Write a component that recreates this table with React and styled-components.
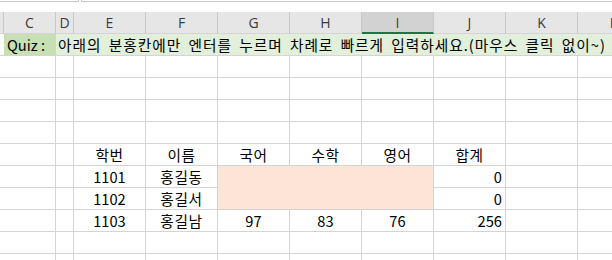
import React from 'react';
import styled, { createGlobalStyle } from 'styled-components';

const GRID = '#d4d4d4';
const COLS = '4px 52px 18px repeat(8, 72px)';
const KR = '"Noto Sans CJK KR", "Noto Sans", sans-serif';

const GlobalStyle = createGlobalStyle`
  html, body { margin: 0; padding: 0; background: #fff; }
  body { font-family: ${KR}; }
`;

const Sheet = styled.div`
  width: 612px;
  height: 260px;
  overflow: hidden;
  background: #fff;
`;

const TopEdge = styled.div`
  display: flex;
  height: 12px;
`;

const NameBox = styled.div`
  width: 78px;
  height: 1px;
  border-bottom: 1px solid #c8c8c8;
  border-right: 1px solid #c8c8c8;
`;

const FormulaBox = styled.div`
  flex: 1;
  margin-left: 2px;
  height: 1px;
  border-bottom: 1px solid #c8c8c8;
  border-left: 1px solid #c8c8c8;
`;

const HeaderRow = styled.div`
  display: grid;
  grid-template-columns: ${COLS};
  height: 22px;
  background: #e6e6e6;
`;

const ColHeader = styled.div`
  box-sizing: border-box;
  display: flex;
  align-items: center;
  justify-content: center;
  border-right: 1px solid #c8c8c8;
  border-bottom: ${p => (p.$selected ? '2px solid #217346' : '1px solid #d4d4d4')};
  background: ${p => (p.$selected ? '#d2d2d2' : 'transparent')};
  font-family: "Open Sans", "Noto Sans", sans-serif;
  font-size: 14px;
  color: #3a3a3a;
  padding-top: ${p => (p.$selected ? '1px' : '0')};
`;

const Body = styled.div`
  display: grid;
  grid-template-columns: ${COLS};
  grid-auto-rows: 22px;
`;

const Cell = styled.div`
  box-sizing: border-box;
  grid-column: span ${p => p.$span || 1};
  grid-row: span ${p => p.$rows || 1};
  border-right: 1px solid ${p => p.$edge || GRID};
  border-bottom: 1px solid ${GRID};
  background: ${p => p.$fill || '#fff'};
  text-align: ${p => p.$align || 'left'};
  padding: 0 ${p => (p.$align === 'right' ? '3px' : '2px')} 0 ${p => p.$pl || '2px'};
  font-size: 14.67px;
  line-height: 22px;
  letter-spacing: ${p => p.$ls || '0'};
  word-spacing: ${p => p.$ws || '0'};
  color: #000;
  white-space: nowrap;
  overflow: visible;
`;

const headers = ['', 'C', 'D', 'E', 'F', 'G', 'H', 'I', 'J', 'K', 'L'];

const EMPTY = Array(11).fill('');

const table = [
  ['', '', '', '학번', '이름', '국어', '수학', '영어', '합계', '', ''],
  ['', '', '', '1101', '홍길동', 'PINK', '0', '', ''],
  ['', '', '', '1102', '홍길서', '0', '', ''],
  ['', '', '', '1103', '홍길남', '97', '83', '76', '256', '', ''],
];

function EmptyRow({ k }) {
  return EMPTY.map((_, i) => <Cell key={`${k}-${i}`} />);
}

const isHangul = v => /[\uac00-\ud7a3]/.test(v);

export default function App() {
  return (
    <>
      <GlobalStyle />
      <Sheet>
        <TopEdge>
          <NameBox />
          <FormulaBox />
        </TopEdge>
        <HeaderRow>
          {headers.map((h, i) => (
            <ColHeader key={i} $selected={h === 'I'}>{h}</ColHeader>
          ))}
        </HeaderRow>
        <Body>
          <Cell />
          <Cell $fill="#c6e0b4" $edge="#c6e0b4" $pl="3px">Quiz :</Cell>
          <Cell $fill="#e2efda" $edge="#e2efda" $span={9} $ls="1px" $ws="3px">
            아래의 분홍칸에만 엔터를 누르며 차례로 빠르게 입력하세요.(마우스 클릭 없이~)
          </Cell>
          {[1, 2, 3, 4].map(r => <EmptyRow key={r} k={r} />)}
          {table.map((row, r) =>
            row.map((v, i) => {
              if (v === 'PINK') {
                return <Cell key={`t${r}-${i}`} $span={3} $rows={2} $fill="#fce4d6" />;
              }
              const isSum = (r === 1 || r === 2) ? v === '0' : (r === 3 && v === '256');
              return (
                <Cell
                  key={`t${r}-${i}`}
                  $align={isSum ? 'right' : 'center'}
                  $ls={isHangul(v) ? '0.6px' : '0'}
                >
                  {v}
                </Cell>
              );
            })
          )}
          <EmptyRow k={9} />
          <EmptyRow k={10} />
        </Body>
      </Sheet>
    </>
  );
}
